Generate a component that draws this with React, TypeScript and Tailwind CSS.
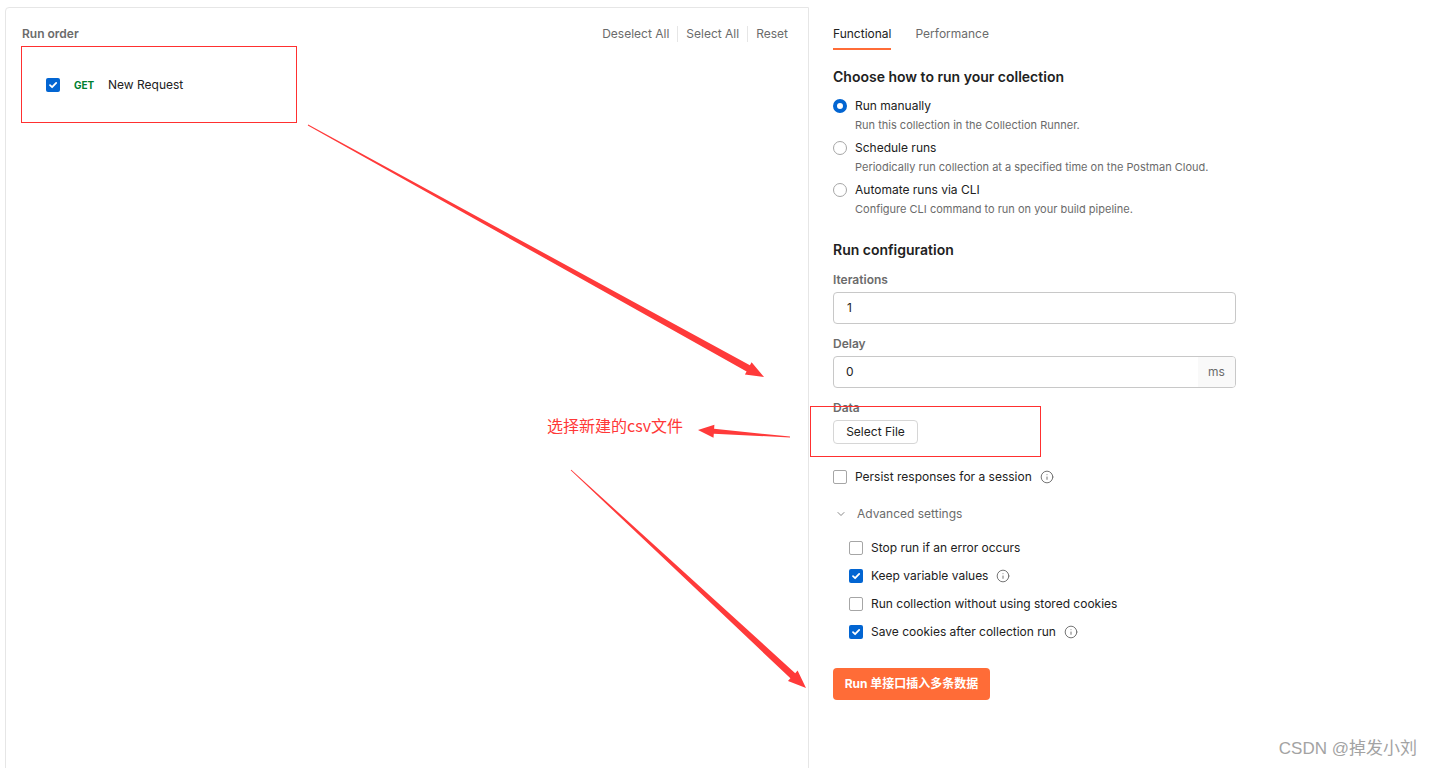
import { FC } from 'react';
import { Info, ChevronDown } from 'lucide-react';

const font = { fontFamily: 'Inter, "Noto Sans CJK SC", sans-serif' };

const Check: FC<{ checked?: boolean }> = ({ checked = false }) =>
  checked ? (
    <span className="flex h-[14px] w-[14px] shrink-0 items-center justify-center rounded-[2px] bg-[#0265d2]">
      <svg width="10" height="10" viewBox="0 0 10 10" fill="none">
        <path d="M2 5.2 4.1 7.2 8.2 2.9" stroke="white" strokeWidth="1.8" strokeLinecap="round" strokeLinejoin="round" />
      </svg>
    </span>
  ) : (
    <span className="h-[14px] w-[14px] shrink-0 rounded-[2px] border border-[#a6a6a6] bg-white" />
  );

const Radio: FC<{ checked?: boolean }> = ({ checked = false }) => (
  <span
    className={
      checked
        ? 'h-[14px] w-[14px] shrink-0 rounded-full border-[4px] border-[#0265d2] bg-white'
        : 'h-[14px] w-[14px] shrink-0 rounded-full border border-[#a6a6a6] bg-white'
    }
  />
);

// tapered red arrow, like the ones drawn on screenshots
const arrowPoints = (x1: number, y1: number, x2: number, y2: number, shaft: number, headLen: number, headW: number) => {
  const len = Math.hypot(x2 - x1, y2 - y1);
  const ux = (x2 - x1) / len;
  const uy = (y2 - y1) / len;
  const nx = -uy;
  const ny = ux;
  const cx = x2 - ux * headLen;
  const cy = y2 - uy * headLen;
  const pts = [
    [x1 + nx * 0.4, y1 + ny * 0.4],
    [cx + (nx * shaft) / 2, cy + (ny * shaft) / 2],
    [cx + (nx * headW) / 2, cy + (ny * headW) / 2],
    [x2, y2],
    [cx - (nx * headW) / 2, cy - (ny * headW) / 2],
    [cx - (nx * shaft) / 2, cy - (ny * shaft) / 2],
    [x1 - nx * 0.4, y1 - ny * 0.4],
  ];
  return pts.map((p) => `${p[0].toFixed(1)},${p[1].toFixed(1)}`).join(' ');
};

const radios = [
  { label: 'Run manually', desc: 'Run this collection in the Collection Runner.', checked: true },
  { label: 'Schedule runs', desc: 'Periodically run collection at a specified time on the Postman Cloud.' },
  { label: 'Automate runs via CLI', desc: 'Configure CLI command to run on your build pipeline.' },
];

const advanced = [
  { label: 'Stop run if an error occurs' },
  { label: 'Keep variable values', checked: true, info: true },
  { label: 'Run collection without using stored cookies' },
  { label: 'Save cookies after collection run', checked: true, info: true },
];

const App: FC = () => {
  return (
    <div className="relative flex h-[768px] w-[1431px] overflow-hidden bg-white text-[12px] text-[#212121]" style={font}>
      {/* Run order panel */}
      <div className="ml-[5px] mt-[7px] flex h-[800px] w-[804px] shrink-0 flex-col rounded-tl-[4px] border border-[#e6e6e6] pl-[16px] pr-[12px] pt-[17px]">
        <div className="flex items-center justify-between">
          <span className="font-semibold leading-[18px] text-[#6b6b6b]">Run order</span>
          <div className="flex items-center text-[#6b6b6b]">
            <span className="px-[8px] leading-[18px]">Deselect All</span>
            <span className="h-[16px] w-px bg-[#e6e6e6]" />
            <span className="px-[8px] leading-[18px]">Select All</span>
            <span className="h-[16px] w-px bg-[#e6e6e6]" />
            <span className="px-[8px] leading-[18px]">Reset</span>
          </div>
        </div>
        <div className="mt-[34px] flex h-[16px] items-center pl-[24px]">
          <Check checked />
          <span className="ml-[14px] w-[34px] text-[10px] font-bold text-[#007f31]">GET</span>
          <span>New Request</span>
        </div>
      </div>

      {/* Settings column */}
      <div className="flex w-[403px] shrink-0 flex-col pl-[24px]">
        <div className="mt-[25px] flex gap-[24px]">
          <div className="flex flex-col">
            <span className="leading-[18px]">Functional</span>
            <span className="mt-[5px] h-[2px] w-full bg-[#ff6c37]" />
          </div>
          <span className="leading-[18px] text-[#6b6b6b]">Performance</span>
        </div>

        <h2 className="mt-[17px] text-[14px] font-semibold leading-[20px]">Choose how to run your collection</h2>
        <div className="mt-[11px] flex flex-col gap-[7px]">
          {radios.map((r) => (
            <div key={r.label} className="flex flex-col">
              <div className="flex h-[16px] items-center gap-[8px]">
                <Radio checked={r.checked} />
                <span>{r.label}</span>
              </div>
              <span className="mt-[3px] pl-[22px] text-[11px] leading-[16px] text-[#6b6b6b]">{r.desc}</span>
            </div>
          ))}
        </div>

        <h2 className="mt-[23px] text-[14px] font-semibold leading-[20px]">Run configuration</h2>
        <span className="mt-[12px] font-semibold leading-[16px] text-[#6b6b6b]">Iterations</span>
        <div className="mt-[4px] flex h-[32px] w-[403px] items-center rounded-[4px] border border-[#c8c8c8] px-[13px]">1</div>
        <span className="mt-[12px] font-semibold leading-[16px] text-[#6b6b6b]">Delay</span>
        <div className="mt-[4px] flex h-[32px] w-[403px] items-stretch overflow-hidden rounded-[4px] border border-[#c8c8c8]">
          <span className="flex flex-1 items-center px-[12px]">0</span>
          <span className="flex w-[37px] items-center justify-center bg-[#f9f9f9] text-[#6b6b6b]">ms</span>
        </div>
        <span className="mt-[12px] font-semibold leading-[16px] text-[#6b6b6b]">Data</span>
        <button className="mt-[4px] h-[24px] w-[85px] rounded-[4px] border border-[#d6d6d6] bg-white text-[12px] text-[#212121]">
          Select File
        </button>

        <div className="mt-[25px] flex h-[16px] items-center gap-[8px]">
          <Check />
          <span>Persist responses for a session</span>
          <Info size={14} strokeWidth={1.6} className="text-[#6b6b6b]" />
        </div>

        <div className="mt-[21px] flex h-[16px] items-center gap-[10px] pl-[2px] text-[#6b6b6b]">
          <ChevronDown size={12} strokeWidth={1.6} />
          <span>Advanced settings</span>
        </div>

        <div className="mt-[18px] flex flex-col gap-[12px] pl-[16px]">
          {advanced.map((a) => (
            <div key={a.label} className="flex h-[16px] items-center gap-[8px]">
              <Check checked={a.checked} />
              <span>{a.label}</span>
              {a.info && <Info size={14} strokeWidth={1.6} className="text-[#6b6b6b]" />}
            </div>
          ))}
        </div>

        <button className="mt-[28px] h-[32px] w-[157px] rounded-[4px] bg-[#ff6c37] text-[12px] font-bold text-white">
          Run 单接口插入多条数据
        </button>
      </div>

      {/* annotations drawn over the screenshot */}
      <div className="absolute left-[21px] top-[46px] h-[77px] w-[276px] border border-[#ff3030]" />
      <div className="absolute left-[810px] top-[406px] h-[51px] w-[231px] border border-[#ff3030]" />
      <span
        className="absolute left-[547px] top-[414px] text-[16px] leading-[22px] text-[#ff3838]"
        style={{ fontFamily: '"Noto Sans CJK SC", sans-serif' }}
      >
        选择新建的csv文件
      </span>
      <svg className="pointer-events-none absolute left-0 top-0" width="1431" height="768">
        <polygon points={arrowPoints(308, 125, 764, 377, 7, 18, 14)} fill="#ff3a3a" />
        <polygon points={arrowPoints(571, 470, 806, 688, 7, 18, 14)} fill="#ff3a3a" />
        <polygon points={arrowPoints(790, 437, 698, 430, 5, 16, 13)} fill="#ff3a3a" />
      </svg>
      <span
        className="absolute right-[14px] top-[737px] text-[17px] leading-[24px] text-[#a3a3a3]"
        style={{ fontFamily: '"Liberation Sans", "Noto Sans CJK SC", sans-serif' }}
      >
        CSDN @掉发小刘
      </span>
    </div>
  );
};

export default App;
